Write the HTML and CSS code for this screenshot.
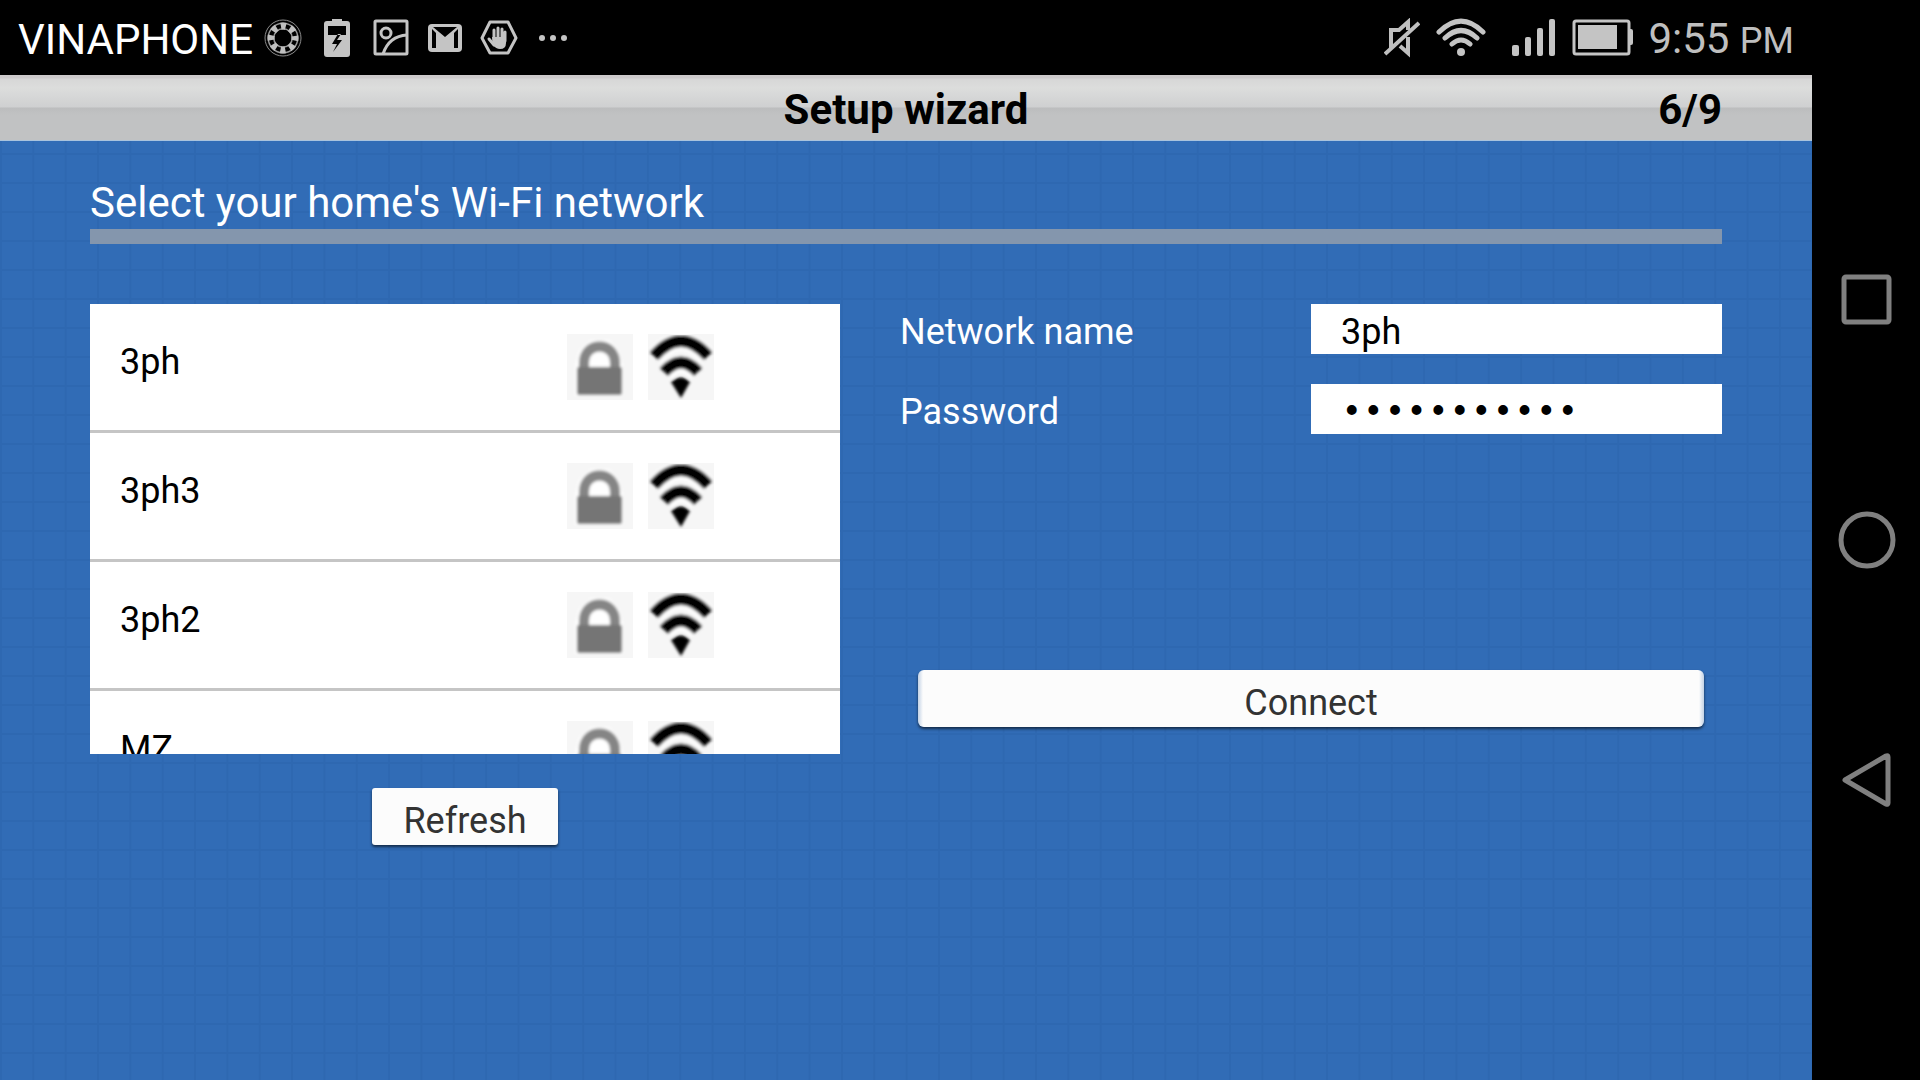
FILE: index.html
```
<!DOCTYPE html>
<html lang="en">
<head>
    <meta charset="UTF-8">
    <title>Setup wizard</title>
    <link rel="stylesheet" href="styles.css">
</head>
<body>
    <svg class="sprite" aria-hidden="true">
        <symbol id="lock" viewBox="0 0 66 66">
            <rect width="66" height="66" fill="#f6f6f6"/>
            <g filter="url(#soften)">
                <path d="M8 62V33l4-16L24 6h18l10 11 4 16v29z" fill="#fff"/>
                <path d="M17 36V29C17 7 48 7 48 29v9" fill="none" stroke="#858585" stroke-width="10"/>
                <rect x="10" y="33" width="45" height="28" rx="2" fill="#757575"/>
            </g>
        </symbol>
        <symbol id="wifi" viewBox="0 0 66 66">
            <rect width="66" height="66" fill="#f6f6f6"/>
            <g filter="url(#soften)">
                <path d="M7 22Q33 -6 59 22M17 39Q33 21 49 39" fill="none" stroke="#fff" stroke-width="18"/>
                <path d="M6 22Q33 -8 60 22M16 38Q33 19 50 38" fill="none" stroke="#000" stroke-width="12"/>
                <path d="M23 48Q33 39 42 48L33 64z" fill="#000"/>
            </g>
        </symbol>
        <filter id="soften"><feGaussianBlur stdDeviation="1.6"/></filter>
    </svg>
    <div class="device">
        <div class="screen">
            <div class="status-bar">
                <span class="carrier">VINAPHONE</span>
                <div class="notifications">
                    <svg viewBox="0 0 38 40" fill="none" stroke="#bfbfbf">
                        <circle cx="19" cy="20" r="18" stroke="#8c8c8c"/>
                        <circle cx="19" cy="20" r="12" stroke-width="7" stroke="#999"/>
                        <circle cx="19" cy="20" r="12" stroke-width="4" stroke="#000"/>
                        <circle cx="19" cy="20" r="12" stroke-width="7" stroke-dasharray="5 4.425" stroke-dashoffset="2.5"/>
                    </svg>
                    <svg viewBox="0 0 26 40">
                        <path d="M8 1h10v2h5q3 0 3 3v30q0 3-3 3H3q-3 0-3-3V6q0-3 3-3h5z" fill="#c4c4c4"/>
                        <path d="M4 8h18v9H4zM14 16L8 26h5l-4 8 9-12h-5l4-6z" fill="#000"/>
                    </svg>
                    <svg viewBox="0 0 36 40" fill="none" stroke="#c4c4c4" stroke-width="3">
                        <rect x="2" y="3" width="32" height="33" rx="1"/>
                        <circle cx="13" cy="15" r="5"/>
                        <path d="M10 36Q16 18 34 17"/>
                    </svg>
                    <svg viewBox="0 0 34 40">
                        <rect y="6" width="34" height="28" rx="4" fill="#c4c4c4"/>
                        <path d="M4 30V11l4 4v15zM30 30V11l-4 4v15zM5 9h24L17 19z" fill="#000"/>
                    </svg>
                    <svg viewBox="0 0 38 40">
                        <path d="M10 4h18l8 16-8 15H10L2 20z" fill="none" stroke="#c4c4c4" stroke-width="3" stroke-linejoin="round"/>
                        <path d="M14 22V12M18 22V10M22 22V11M25 23V14M14 27l-5-6" stroke="#c4c4c4" stroke-width="3" stroke-linecap="round"/>
                        <path d="M12 19h14v6q0 6-6 6-4 0-7-4z" fill="#c4c4c4"/>
                    </svg>
                    <svg viewBox="0 0 30 40" fill="#c4c4c4">
                        <circle cx="4" cy="20" r="3"/><circle cx="15" cy="20" r="3"/><circle cx="26" cy="20" r="3"/>
                    </svg>
                </div>
                <div class="indicators">
                    <svg width="36" height="40" viewBox="0 0 36 40" fill="none" stroke="#bfbfbf" stroke-width="4">
                        <path d="M7 30V12h8l9-8v8M16 28l8 7V19M1 36L35 5"/>
                    </svg>
                    <svg class="signal-wifi" width="50" height="40" viewBox="0 0 50 40" fill="none" stroke="#c4c4c4" stroke-width="5" stroke-linecap="round">
                        <path d="M3 14Q25 -8 47 14M9 20Q25 5 41 20M16 26Q25 18 34 26"/>
                        <circle cx="25" cy="34" r="4" fill="#c4c4c4" stroke="none"/>
                    </svg>
                    <svg class="signal-cell" width="44" height="40" viewBox="0 0 44 40" fill="#c4c4c4">
                        <rect y="27" width="7" height="11" rx="2"/>
                        <rect x="13" y="19" width="6" height="19" rx="2"/>
                        <rect x="25" y="10" width="6" height="28" rx="2"/>
                        <rect x="37" y="1" width="6" height="37" rx="2"/>
                    </svg>
                    <svg class="battery" width="62" height="40" viewBox="0 0 62 40" fill="#c4c4c4">
                        <rect x="2" y="3" width="55" height="33" rx="2" fill="none" stroke="#c4c4c4" stroke-width="3"/>
                        <rect x="6" y="7" width="39" height="24"/>
                        <path d="M58 11h1q2 0 2 2v12q0 2-2 2h-1z"/>
                    </svg>
                    <span class="clock">9:55 <small>PM</small></span>
                </div>
            </div>
            <header class="title-bar">
                <h1>Setup wizard</h1>
                <span class="step">6/9</span>
            </header>
            <main class="wizard">
                <h2>Select your home's Wi-Fi network</h2>
                <div class="columns">
                    <section class="networks">
                        <ul class="network-list">
                            <li class="network">
                                <span class="network-name">3ph</span>
                                <svg class="network-icon"><use href="#lock"/></svg>
                                <svg class="network-icon"><use href="#wifi"/></svg>
                            </li>
                            <li class="network">
                                <span class="network-name">3ph3</span>
                                <svg class="network-icon"><use href="#lock"/></svg>
                                <svg class="network-icon"><use href="#wifi"/></svg>
                            </li>
                            <li class="network">
                                <span class="network-name">3ph2</span>
                                <svg class="network-icon"><use href="#lock"/></svg>
                                <svg class="network-icon"><use href="#wifi"/></svg>
                            </li>
                            <li class="network">
                                <span class="network-name">MZ</span>
                                <svg class="network-icon"><use href="#lock"/></svg>
                                <svg class="network-icon"><use href="#wifi"/></svg>
                            </li>
                        </ul>
                        <button class="btn refresh-btn" type="button">Refresh</button>
                    </section>
                    <form class="credentials">
                        <div class="field">
                            <label for="networkName">Network name</label>
                            <input type="text" id="networkName" value="3ph">
                        </div>
                        <div class="field">
                            <label for="password">Password</label>
                            <input type="password" id="password" class="password-input" value="12345678901">
                        </div>
                        <button class="btn connect-btn" type="button">Connect</button>
                    </form>
                </div>
            </main>
        </div>
        <nav class="nav-bar">
            <button class="nav-btn" type="button" aria-label="Recent apps">
                <svg width="60" height="60" viewBox="0 0 60 60"><rect x="8" y="7" width="45" height="45" rx="2"/></svg>
            </button>
            <button class="nav-btn" type="button" aria-label="Home">
                <svg width="60" height="60" viewBox="0 0 60 60"><circle cx="31" cy="30" r="26"/></svg>
            </button>
            <button class="nav-btn" type="button" aria-label="Back">
                <svg width="60" height="60" viewBox="0 0 60 60"><path d="M9 30L50 6q2-1 2 1v46q0 2-2 1z"/></svg>
            </button>
        </nav>
    </div>
</body>
</html>
```
FILE: styles.css
```
* {
    box-sizing: border-box;
}
body {
    margin: 0;
    background: #000;
    font-family: Roboto, "Liberation Sans", sans-serif;
    font-size: 36px;
    line-height: 42px;
}
.sprite {
    position: absolute;
    width: 0;
    height: 0;
}
.device {
    display: flex;
    min-height: 100vh;
}
.screen {
    flex: 1;
    display: flex;
    flex-direction: column;
}
.status-bar {
    display: flex;
    align-items: center;
    height: 75px;
    padding: 0 18px;
    color: #fff;
    font-size: 42px;
}
.status-bar svg {
    display: block;
}
.carrier {
    padding-top: 4px;
}
.notifications {
    display: flex;
    align-items: center;
    gap: 16px;
    margin-left: 11px;
}
.notifications svg {
    width: 38px;
    height: 40px;
}
.indicators {
    display: flex;
    align-items: center;
    margin-left: auto;
}
.signal-wifi {
    margin-left: 16px;
}
.signal-cell {
    margin-left: 26px;
}
.battery {
    margin-left: 16px;
}
.clock {
    margin-left: 14px;
    padding-top: 4px;
    color: #bfbfbf;
}
.clock small {
    font-size: 36px;
}
.title-bar {
    display: grid;
    grid-template-columns: 1fr auto 1fr;
    align-items: center;
    height: 66px;
    padding: 4px 90px 0;
    border-bottom: 1px solid #a9c3dd;
    background: linear-gradient(#cdcacb 0, #cdcacb 3px, #d7d7d7 4px, #dcdddc 13px, #cfd0d1 32px, #bcbdbe 33px, #c1c2c3 40px, #c1c2c3 100%);
    color: #000;
    font-size: 42px;
    font-weight: bold;
}
.title-bar h1 {
    grid-column: 2;
    margin: 0;
    font-size: 42px;
}
.step {
    text-align: right;
}
.wizard {
    flex: 1;
    padding: 36px 90px;
    background-color: #316cb6;
    background-image: linear-gradient(90deg, #2e68b1 2px, transparent 2px), linear-gradient(#2e68b1 2px, transparent 2px);
    background-position: 0 12px;
    background-size: calc(100% / 56) 29px;
}
.wizard h2 {
    margin: 0;
    border-bottom: 15px solid #8496ad;
    color: #fff;
    font-size: 42px;
    font-weight: normal;
    line-height: 52px;
}
.columns {
    display: grid;
    grid-template-columns: 750fr 822fr;
    gap: 60px;
    margin-top: 60px;
}
.networks {
    text-align: center;
}
.network-list {
    height: 450px;
    margin: 0 0 34px;
    padding: 0;
    overflow: hidden;
    background: #fff;
    list-style: none;
    text-align: left;
}
.network {
    display: flex;
    gap: 15px;
    padding: 30px 126px 30px 30px;
    border-bottom: 3px solid #c5c5c5;
}
.network-name {
    flex: 1;
    color: #000;
    line-height: 56px;
}
.network-icon {
    width: 66px;
    height: 66px;
}
.btn {
    height: 57px;
    padding: 8px 31px 0;
    border: none;
    border-radius: 3px;
    background: #fcfcfc;
    box-shadow: 0 2px 3px rgba(0, 0, 0, 0.6);
    color: #333;
    font: inherit;
    cursor: pointer;
}
.credentials {
    display: flex;
    flex-direction: column;
    gap: 30px;
}
.field {
    display: grid;
    grid-template-columns: 1fr 1fr;
    align-items: center;
    color: #fff;
}
.field label {
    padding-top: 6px;
}
.field input {
    width: 100%;
    height: 50px;
    padding: 6px 30px 0;
    border: none;
    border-radius: 0;
    background: #fff;
    color: #000;
    font: inherit;
}
.field .password-input {
    font-family: "Liberation Mono", monospace;
}
.connect-btn {
    margin: 206px 18px 0;
    border-radius: 6px;
    background: linear-gradient(90deg, #c3d2e5, #fcfcfc 5px, #fcfcfc calc(100% - 5px), #c3d2e5);
}
.nav-bar {
    display: flex;
    flex-direction: column;
    align-items: center;
    justify-content: center;
    gap: 180px;
    width: 108px;
}
.nav-btn {
    padding: 0;
    border: none;
    background: none;
    cursor: pointer;
}
.nav-btn svg {
    display: block;
    fill: none;
    stroke: #808080;
    stroke-width: 5px;
    stroke-linejoin: round;
}
```
